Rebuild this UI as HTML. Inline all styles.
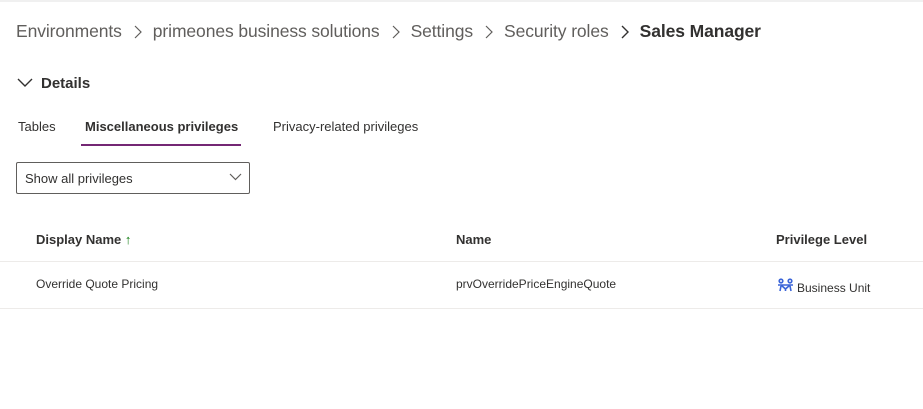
<!DOCTYPE html><html><head><style>
body{margin:0;width:923px;height:409px;background:#fff;font-family:"Liberation Sans",sans-serif;position:relative;overflow:hidden;color:#323130}
.a{position:absolute;white-space:nowrap}
.c{display:inline-block;margin:0 11px 0 12px;vertical-align:middle}
</style></head><body>
<div class="a" style="left:0;top:0;width:923px;height:2px;background:#f0f0f0"></div>
<div class="a" style="left:16px;top:21px;font-size:17.5px;color:#605e5c;letter-spacing:-0.1px">Environments<svg class="c" width="8" height="14"><path d="M1 1 L7 7 L1 13" fill="none" stroke="#605e5c" stroke-width="1.2"/></svg>primeones business solutions<svg class="c" width="8" height="14"><path d="M1 1 L7 7 L1 13" fill="none" stroke="#605e5c" stroke-width="1.2"/></svg>Settings<svg class="c" width="8" height="14"><path d="M1 1 L7 7 L1 13" fill="none" stroke="#605e5c" stroke-width="1.2"/></svg>Security roles<svg class="c" width="8" height="14"><path d="M1 1 L7 7 L1 13" fill="none" stroke="#323130" stroke-width="1.4"/></svg><b style="color:#323130">Sales Manager</b></div>
<svg class="a" style="left:17px;top:78px" width="16" height="10"><path d="M1 1 L8 8 L15 1" fill="none" stroke="#323130" stroke-width="1.4"/></svg>
<div class="a" style="left:41px;top:75px;font-size:15px;font-weight:bold">Details</div>
<div class="a" style="left:18px;top:119px;font-size:13px">Tables</div>
<div class="a" style="left:85px;top:119px;font-size:13px;font-weight:bold">Miscellaneous privileges</div>
<div class="a" style="left:81px;top:144px;width:160px;height:2px;background:#742774"></div>
<div class="a" style="left:273px;top:119px;font-size:13px">Privacy-related privileges</div>
<div class="a" style="left:16px;top:162px;width:232px;height:30px;border:1px solid #605e5c;border-radius:2px"></div>
<div class="a" style="left:25px;top:171px;font-size:13px">Show all privileges</div>
<svg class="a" style="left:229px;top:173px" width="13" height="8"><path d="M1 1 L6.5 6.5 L12 1" fill="none" stroke="#605e5c" stroke-width="1.2"/></svg>
<div class="a" style="left:36px;top:232px;font-size:13px;font-weight:bold">Display Name <span style="font-weight:normal;color:#107c10">↑</span></div>
<div class="a" style="left:456px;top:232px;font-size:13px;font-weight:bold">Name</div>
<div class="a" style="left:776px;top:232px;font-size:13px;font-weight:bold">Privilege Level</div>
<div class="a" style="left:0;top:261px;width:923px;height:1px;background:#edebe9"></div>
<div class="a" style="left:36px;top:277px;font-size:12px">Override Quote Pricing</div>
<div class="a" style="left:456px;top:277px;font-size:12px">prvOverridePriceEngineQuote</div>
<svg class="a" style="left:777px;top:278px" width="17" height="14"><g fill="none" stroke="#3a64d8" stroke-width="1.6"><circle cx="4" cy="3" r="1.8"/><circle cx="13" cy="3" r="1.8"/><path d="M1 7 H16 M4 7 L8.5 11 L13 7 M3 13 L4 8 M14 13 L13 8 M8.5 11 V13"/></g></svg>
<div class="a" style="left:797px;top:281px;font-size:12px">Business Unit</div>
<div class="a" style="left:0;top:308px;width:923px;height:1px;background:#edebe9"></div>
</body></html>
